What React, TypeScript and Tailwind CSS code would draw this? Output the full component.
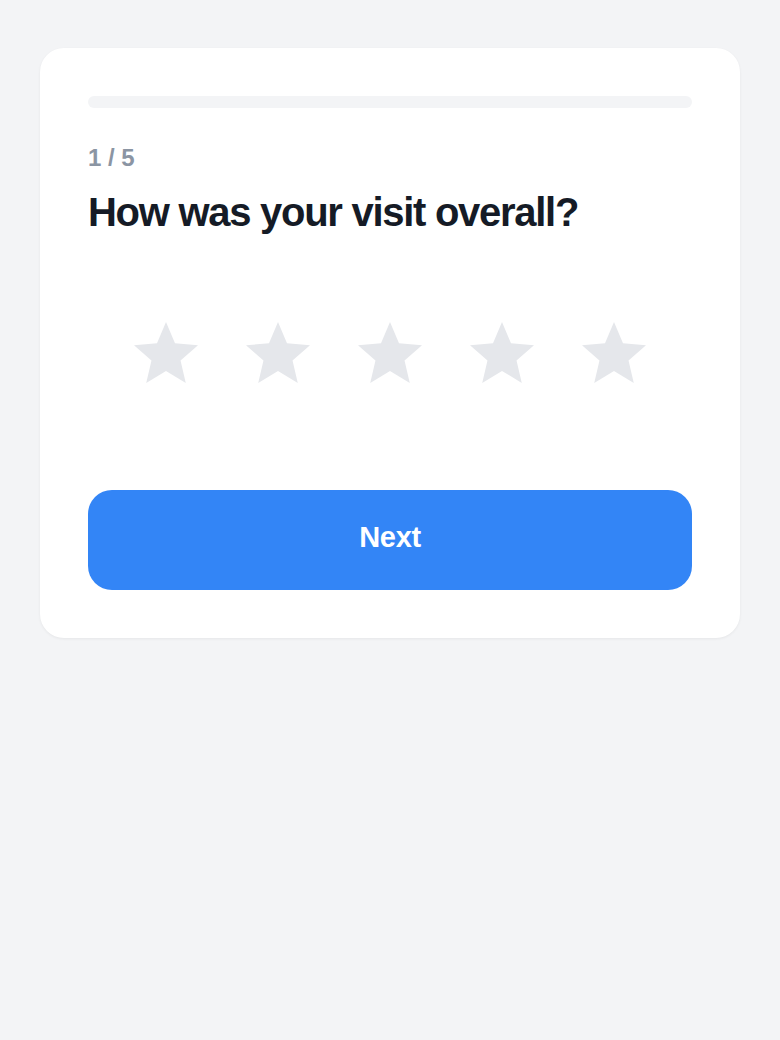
import { useState } from "react";

const STARS = [1, 2, 3, 4, 5];

function Star({ filled }: { filled: boolean }) {
  return (
    <svg viewBox="2 2 20 19" className="w-[64px] h-[61px]" aria-hidden="true">
      <path
        d="M12 17.27L18.18 21l-1.64-7.03L22 9.24l-7.19-.61L12 2 9.19 8.63 2 9.24l5.46 4.73L5.82 21z"
        fill={filled ? "#fbbf24" : "#e5e7eb"}
      />
    </svg>
  );
}

export default function App() {
  const [rating, setRating] = useState(0);

  return (
    <div className="min-h-screen bg-[#f3f4f6] px-[40px] pt-[48px] font-['Liberation_Sans',Arial,sans-serif]">
      <div className="bg-white rounded-[24px] p-[48px] shadow-[0_1px_3px_rgba(0,0,0,0.06)]">
        {/* Progress */}
        <div className="h-[12px] rounded-full bg-[#f3f4f6] overflow-hidden">
          <div className="h-full bg-[#3385f6]" style={{ width: "0%" }} />
        </div>

        <div className="mt-[34px] text-[24px] leading-[32px] font-bold text-[#8b95a3]">1 / 5</div>
        <h1 className="mt-[14px] text-[40px] leading-[48px] font-bold tracking-[-0.032em] text-[#151b26]">
          How was your visit overall?
        </h1>

        <div className="mt-[86px] flex justify-center gap-[48px]">
          {STARS.map((n) => (
            <button key={n} type="button" onClick={() => setRating(n)} className="block">
              <Star filled={n <= rating} />
            </button>
          ))}
        </div>

        <button
          type="button"
          className="mt-[107px] w-full h-[100px] pb-[4px] rounded-[24px] bg-[#3385f6] text-white text-[29px] font-bold tracking-[-0.01em]"
        >
          Next
        </button>
      </div>
    </div>
  );
}
